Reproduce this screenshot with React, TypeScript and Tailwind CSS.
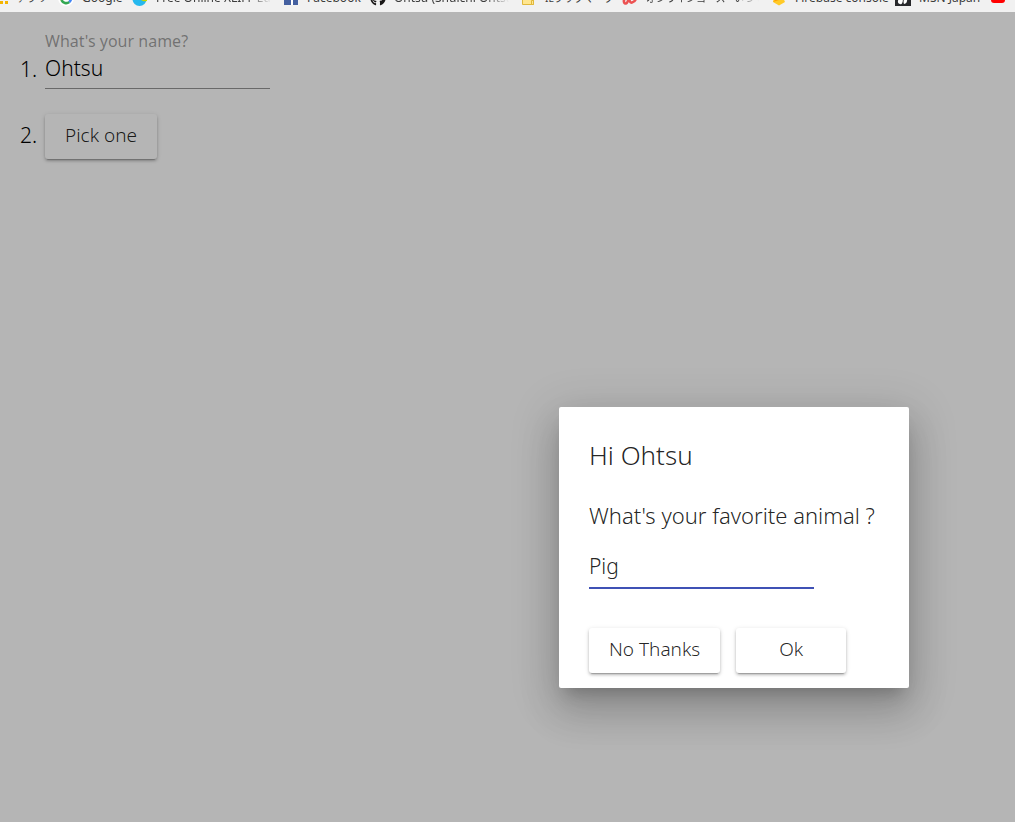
import React, { useState } from "react";
import { FaGithub } from "react-icons/fa";

type Bookmark = { label: string; width: string; faded?: boolean; kana?: boolean; icon: React.ReactNode };

const bookmarks: Bookmark[] = [
  {
    label: "アプリ",
    width: "w-[65px]",
    kana: true,
    icon: (
      <svg viewBox="0 0 16 16" className="size-4" fill="#f4b400">
        <path d="M2 1h3v3H2zM7 1h3v3H7zM12 1h3v3h-3zM2 6h3v3H2zM7 6h3v3H7zM12 6h3v3h-3zM2 11h3v3H2zM7 11h3v3H7zM12 11h3v3h-3z" />
      </svg>
    ),
  },
  {
    label: "Google",
    width: "w-[74px]",
    icon: (
      <svg viewBox="0 0 16 16" className="size-4">
        <circle cx="8" cy="8" r="8" fill="#fff" />
        <g fill="none" strokeWidth="2.6">
          <path d="M12 4.5A5 5 0 0 0 3.7 5.5" stroke="#ea4335" />
          <path d="M3.7 5.5A5 5 0 0 0 3.5 10" stroke="#fbbc05" />
          <path d="M3.5 10A5 5 0 0 0 11.3 12" stroke="#34a853" />
          <path d="M11.3 12A5 5 0 0 0 13 8H8" stroke="#4285f4" />
        </g>
      </svg>
    ),
  },
  {
    label: "Free Online XLIFF Editor",
    width: "w-[151px]",
    faded: true,
    icon: (
      <svg viewBox="0 0 16 16" className="size-4">
        <circle cx="7.5" cy="9" r="7" fill="#26b8ee" />
        <path d="M7 2h8v9c-4 1-7-1-8-4z" fill="#c3d600" />
      </svg>
    ),
  },
  {
    label: "Facebook",
    width: "w-[87px]",
    icon: (
      <svg viewBox="0 0 16 16" className="size-4">
        <path d="M1 1h14v14H1z" fill="#4460a0" />
        <path d="M8 15v-5H6V8h2V6c0-2 1-3 3-3h2v2h-1c-1 0-2 .5-2 1.500V8h3v2h-3v5z" fill="#fff" />
      </svg>
    ),
  },
  { label: "Ohtsu (Shuichi Ohtsuki)", width: "w-[151px]", faded: true, icon: <FaGithub className="size-4 text-[#191717]" /> },
  {
    label: "IEブックマーク",
    width: "w-[101px]",
    kana: true,
    icon: (
      <svg viewBox="0 0 16 16" className="size-4">
        <path d="M1.500 1.500h5l1 2h5v11h-11z" fill="#ffe68f" stroke="#e0b83c" />
        <path d="M10.500 10.500h2v4h-2z" fill="#ffe68f" stroke="#e0b83c" />
      </svg>
    ),
  },
  {
    label: "オンラインコース - いつでも",
    width: "w-[149px]",
    faded: true,
    kana: true,
    icon: (
      <svg viewBox="0 0 16 16" className="size-4">
        <path d="M3 8c-2 3-1 6 1 5.500C6 13 6 9 8 8c-1 3 0 5 2 4.500S14 10 14 7" fill="none" stroke="#ec5252" strokeWidth="2.600" strokeLinecap="round" />
      </svg>
    ),
  },
  {
    label: "Firebase console",
    width: "w-[124px]",
    icon: (
      <svg viewBox="0 0 16 16" className="size-4">
        <path d="M2 12 4 1l4 5 2-3 4 9-6 3.500z" fill="#ffca28" />
        <path d="m2 12 6-6 3 3z" fill="#ffa000" />
      </svg>
    ),
  },
  {
    label: "MSN Japan",
    width: "w-[95px]",
    icon: (
      <svg viewBox="0 0 16 16" className="size-4">
        <path d="M0 0h16v16H0z" fill="#27282b" />
        <path d="M8 8C4 3 2 6 4 9c-2 2-1 5 1 5 2 1 3-2 3-6zM9 8c1-5 5-5 5-2s-2 3-2 5-2 3-3 3c-1-2 0-4 0-6z" fill="#fff" />
      </svg>
    ),
  },
  {
    label: "YouTube",
    width: "w-[95px]",
    icon: (
      <svg viewBox="0 0 16 16" className="size-4">
        <rect x="1" y="2" width="14" height="11" rx="3" fill="#f00" />
        <path d="m6.500 5 4 2.500-4 2.500z" fill="#fff" />
      </svg>
    ),
  },
];

const raised =
  "h-[45px] rounded-[3px] bg-white px-5 pb-[2px] text-[19px] text-black/87 shadow-[0_3px_1px_-2px_rgba(0,0,0,0.2),0_2px_3px_0_rgba(0,0,0,0.2),0_1px_5px_0_rgba(0,0,0,0.12)]";

function BookmarkBar() {
  return (
    <nav className="flex h-3 items-end overflow-hidden bg-[#f1f1f1] pb-[6px] font-['Noto_Sans','Noto_Sans_CJK_JP',sans-serif] text-[12px] leading-4 text-[#3c3c3c]">
      <div className="-ml-[7px] flex">
        {bookmarks.map((b) => (
          <a key={b.label} href="#" className={`flex h-4 shrink-0 items-center gap-2 pr-3 ${b.width}`}>
            <span className="shrink-0">{b.icon}</span>
            <span
              className={`whitespace-nowrap ${b.kana ? "text-[10px]" : ""} ${
                b.faded ? "min-w-0 overflow-hidden [mask-image:linear-gradient(to_right,black_80%,transparent)]" : ""
              }`}
            >
              {b.label}
            </span>
          </a>
        ))}
      </div>
    </nav>
  );
}

export default function App() {
  const [name, setName] = useState("Ohtsu");
  const [animal, setAnimal] = useState("Pig");

  return (
    <div className="flex min-h-screen flex-col">
      <BookmarkBar />
      <div className="relative grow bg-white font-['Noto_Sans',sans-serif] text-[21px] font-light">
        <ol className="flex flex-col items-start gap-[25px] pt-[18px] pl-5 text-black">
          <li className="flex items-end">
            <span className="w-[25px] pb-[5px] leading-[30px]">1.</span>
            <span className="flex flex-col">
              <label htmlFor="name" className="text-[16px] leading-[22px] font-normal text-black/38">
                What's your name?
              </label>
              <input
                id="name"
                value={name}
                onChange={(e) => setName(e.target.value)}
                className="h-[37px] w-[225px] border-b border-black/42 pb-1 outline-none"
              />
            </span>
          </li>
          <li className="flex items-center">
            <span className="w-[25px] pb-[2px]">2.</span>
            <button type="button" className={raised}>
              Pick one
            </button>
          </li>
        </ol>
        <div className="absolute inset-0 bg-black/29" />
        <section
          role="dialog"
          aria-labelledby="dialog-title"
          className="absolute top-[395px] left-[559px] w-[350px] rounded-[2px] bg-white px-[30px] pt-7 pb-[15px] text-black/87 shadow-[0_11px_15px_-7px_rgba(0,0,0,0.2),0_24px_38px_3px_rgba(0,0,0,0.14),0_9px_46px_8px_rgba(0,0,0,0.12)]"
        >
          <h1 id="dialog-title" className="text-[26px] leading-10">
            Hi Ohtsu
          </h1>
          <label htmlFor="animal" className="mt-[26px] block text-[22px] leading-7 whitespace-nowrap">
            What's your favorite animal ?
          </label>
          <input
            id="animal"
            value={animal}
            onChange={(e) => setAnimal(e.target.value)}
            className="mt-5 block h-10 w-[225px] border-b-2 border-[#3f51b5] pb-1 outline-none"
          />
          <div className="mt-[39px] flex gap-4">
            <button type="button" className={raised}>
              No Thanks
            </button>
            <button type="button" className={`${raised} min-w-[110px]`}>
              Ok
            </button>
          </div>
        </section>
      </div>
    </div>
  );
}
